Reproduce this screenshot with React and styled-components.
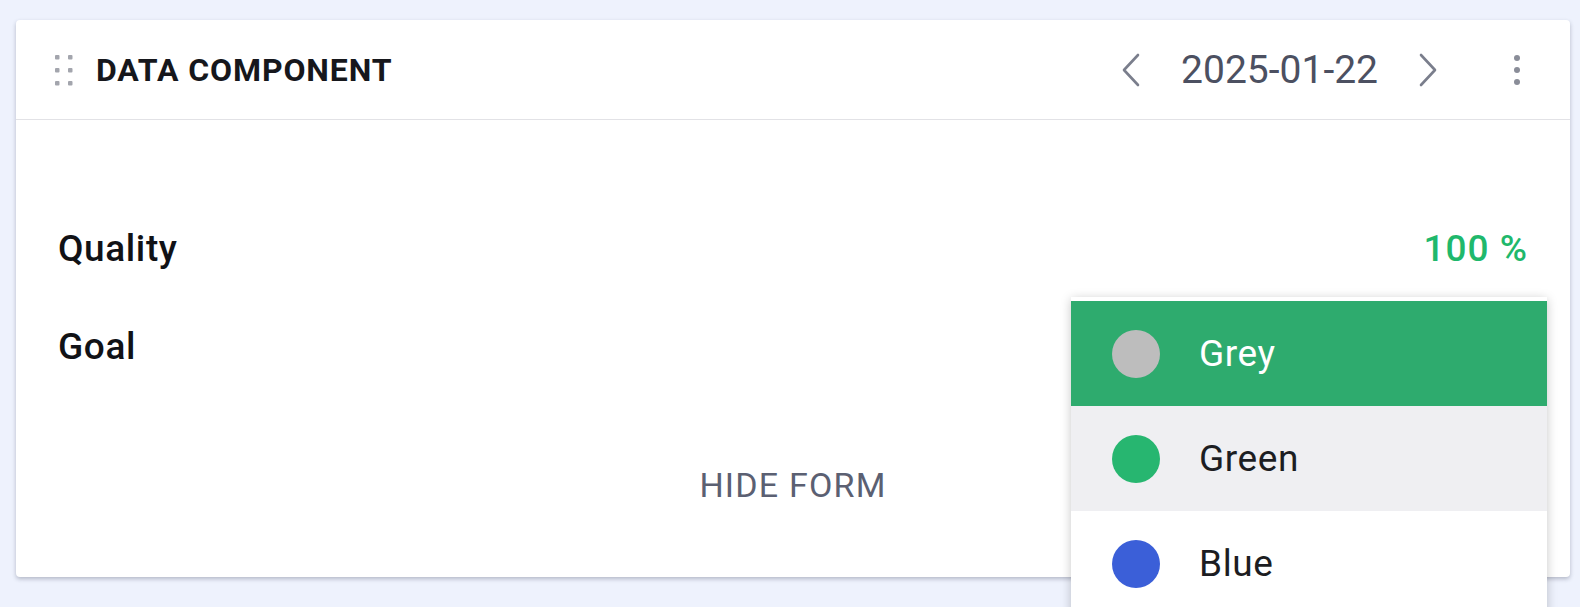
import React, { useState } from "react";
import styled, { createGlobalStyle } from "styled-components";

const GlobalStyle = createGlobalStyle`
  html, body {
    margin: 0;
    padding: 0;
    background: #eef2fd;
    font-family: Roboto, "Liberation Sans", Arial, sans-serif;
  }
`;

const Page = styled.div`
  padding: 20px 10px 40px 16px;
`;

const Card = styled.div`
  position: relative;
  width: 1554px;
  background: #fff;
  border-radius: 4px;
  box-shadow: 0 2px 4px rgba(30, 35, 60, 0.28);
`;

const Header = styled.div`
  display: flex;
  align-items: center;
  height: 99px;
  padding: 0 43px 0 37px;
  border-bottom: 1px solid #e2e2e6;
`;

const Title = styled.div`
  margin-left: 23px;
  font-size: 32px;
  font-weight: 700;
  color: #16171c;
  letter-spacing: 0.9px;
`;

const Spacer = styled.div`
  flex: 1;
`;

const NavButton = styled.button`
  display: flex;
  align-items: center;
  justify-content: center;
  border: 0;
  background: none;
  padding: 0;
  width: 40px;
  height: 40px;
  cursor: pointer;
`;

const DateText = styled.div`
  font-size: 39px;
  color: #4c5061;
  margin: 0 30px 0 30px;
`;

const Kebab = styled(NavButton)`
  margin-left: 59px;
  width: 20px;
`;

const Body = styled.div`
  padding: 106px 42px 70px 42px;
`;

const Row = styled.div`
  display: flex;
  align-items: center;
  justify-content: space-between;
  height: 44px;
  margin-bottom: ${({ $gap }) => $gap || 0}px;
`;

const Label = styled.div`
  font-size: 37px;
  font-weight: 500;
  letter-spacing: 0.6px;
  color: #111216;
`;

const Value = styled.div`
  font-size: 37px;
  font-weight: 500;
  letter-spacing: 1px;
  color: #1fb86c;
`;

const Footer = styled.div`
  display: flex;
  justify-content: center;
  height: 44px;
  align-items: center;
`;

const HideButton = styled.button`
  border: 0;
  background: none;
  font-family: inherit;
  font-size: 34px;
  letter-spacing: 1.2px;
  color: #5b6072;
  cursor: pointer;
  padding: 0;
`;

const Menu = styled.div`
  position: absolute;
  left: 1055px;
  top: 277px;
  width: 476px;
  padding-top: 4px;
  background: #fff;
  box-shadow: 0 2px 10px rgba(0, 0, 0, 0.22);
`;

const Option = styled.div`
  display: flex;
  align-items: center;
  height: 105px;
  padding-left: 41px;
  background: ${({ $selected, $hover }) =>
    $selected ? "#2eab6e" : $hover ? "#efeff2" : "#fff"};
  color: ${({ $selected }) => ($selected ? "#fff" : "#1c1d22")};
  font-size: 37px;
  letter-spacing: 0.6px;
  cursor: pointer;
`;

const Swatch = styled.span`
  width: 48px;
  height: 48px;
  border-radius: 50%;
  background: ${({ $color }) => $color};
  margin-right: 39px;
  flex-shrink: 0;
`;

const DragIcon = () => (
  <svg width="20" height="32" viewBox="0 0 20 32">
    {[0, 1, 2].map((r) =>
      [0, 1].map((c) => (
        <rect
          key={`${r}-${c}`}
          x={2 + c * 13}
          y={1 + r * 13}
          width="4.5"
          height="4.5"
          rx="1"
          fill="#a3a5ad"
        />
      ))
    )}
  </svg>
);

const Chevron = ({ dir }) => (
  <svg width="20" height="34" viewBox="0 0 20 34">
    <path
      d={dir === "left" ? "M17 2 L3 17 L17 32" : "M3 2 L17 17 L3 32"}
      fill="none"
      stroke="#7a7e8c"
      strokeWidth="2.6"
      strokeLinecap="round"
      strokeLinejoin="round"
    />
  </svg>
);

const KebabIcon = () => (
  <svg width="8" height="32" viewBox="0 0 8 32">
    {[4, 16, 28].map((cy) => (
      <circle key={cy} cx="4" cy={cy} r="3" fill="#8a8d98" />
    ))}
  </svg>
);

const colors = [
  { name: "Grey", value: "#bdbdbd" },
  { name: "Green", value: "#27b670" },
  { name: "Blue", value: "#3b5fd8" },
];

export default function App() {
  const [selected, setSelected] = useState("Grey");
  const [hover, setHover] = useState("Green");

  return (
    <Page>
      <GlobalStyle />
      <Card>
        <Header>
          <DragIcon />
          <Title>DATA COMPONENT</Title>
          <Spacer />
          <NavButton aria-label="previous">
            <Chevron dir="left" />
          </NavButton>
          <DateText>2025-01-22</DateText>
          <NavButton aria-label="next">
            <Chevron dir="right" />
          </NavButton>
          <Kebab aria-label="more">
            <KebabIcon />
          </Kebab>
        </Header>
        <Body>
          <Row $gap={54}>
            <Label>Quality</Label>
            <Value>100 %</Value>
          </Row>
          <Row $gap={95}>
            <Label>Goal</Label>
          </Row>
          <Footer>
            <HideButton>HIDE FORM</HideButton>
          </Footer>
        </Body>
        <Menu>
          {colors.map((c) => (
            <Option
              key={c.name}
              $selected={selected === c.name}
              $hover={hover === c.name}
              onClick={() => setSelected(c.name)}
              onMouseEnter={() => setHover(c.name)}
            >
              <Swatch $color={c.value} />
              {c.name}
            </Option>
          ))}
        </Menu>
      </Card>
    </Page>
  );
}
